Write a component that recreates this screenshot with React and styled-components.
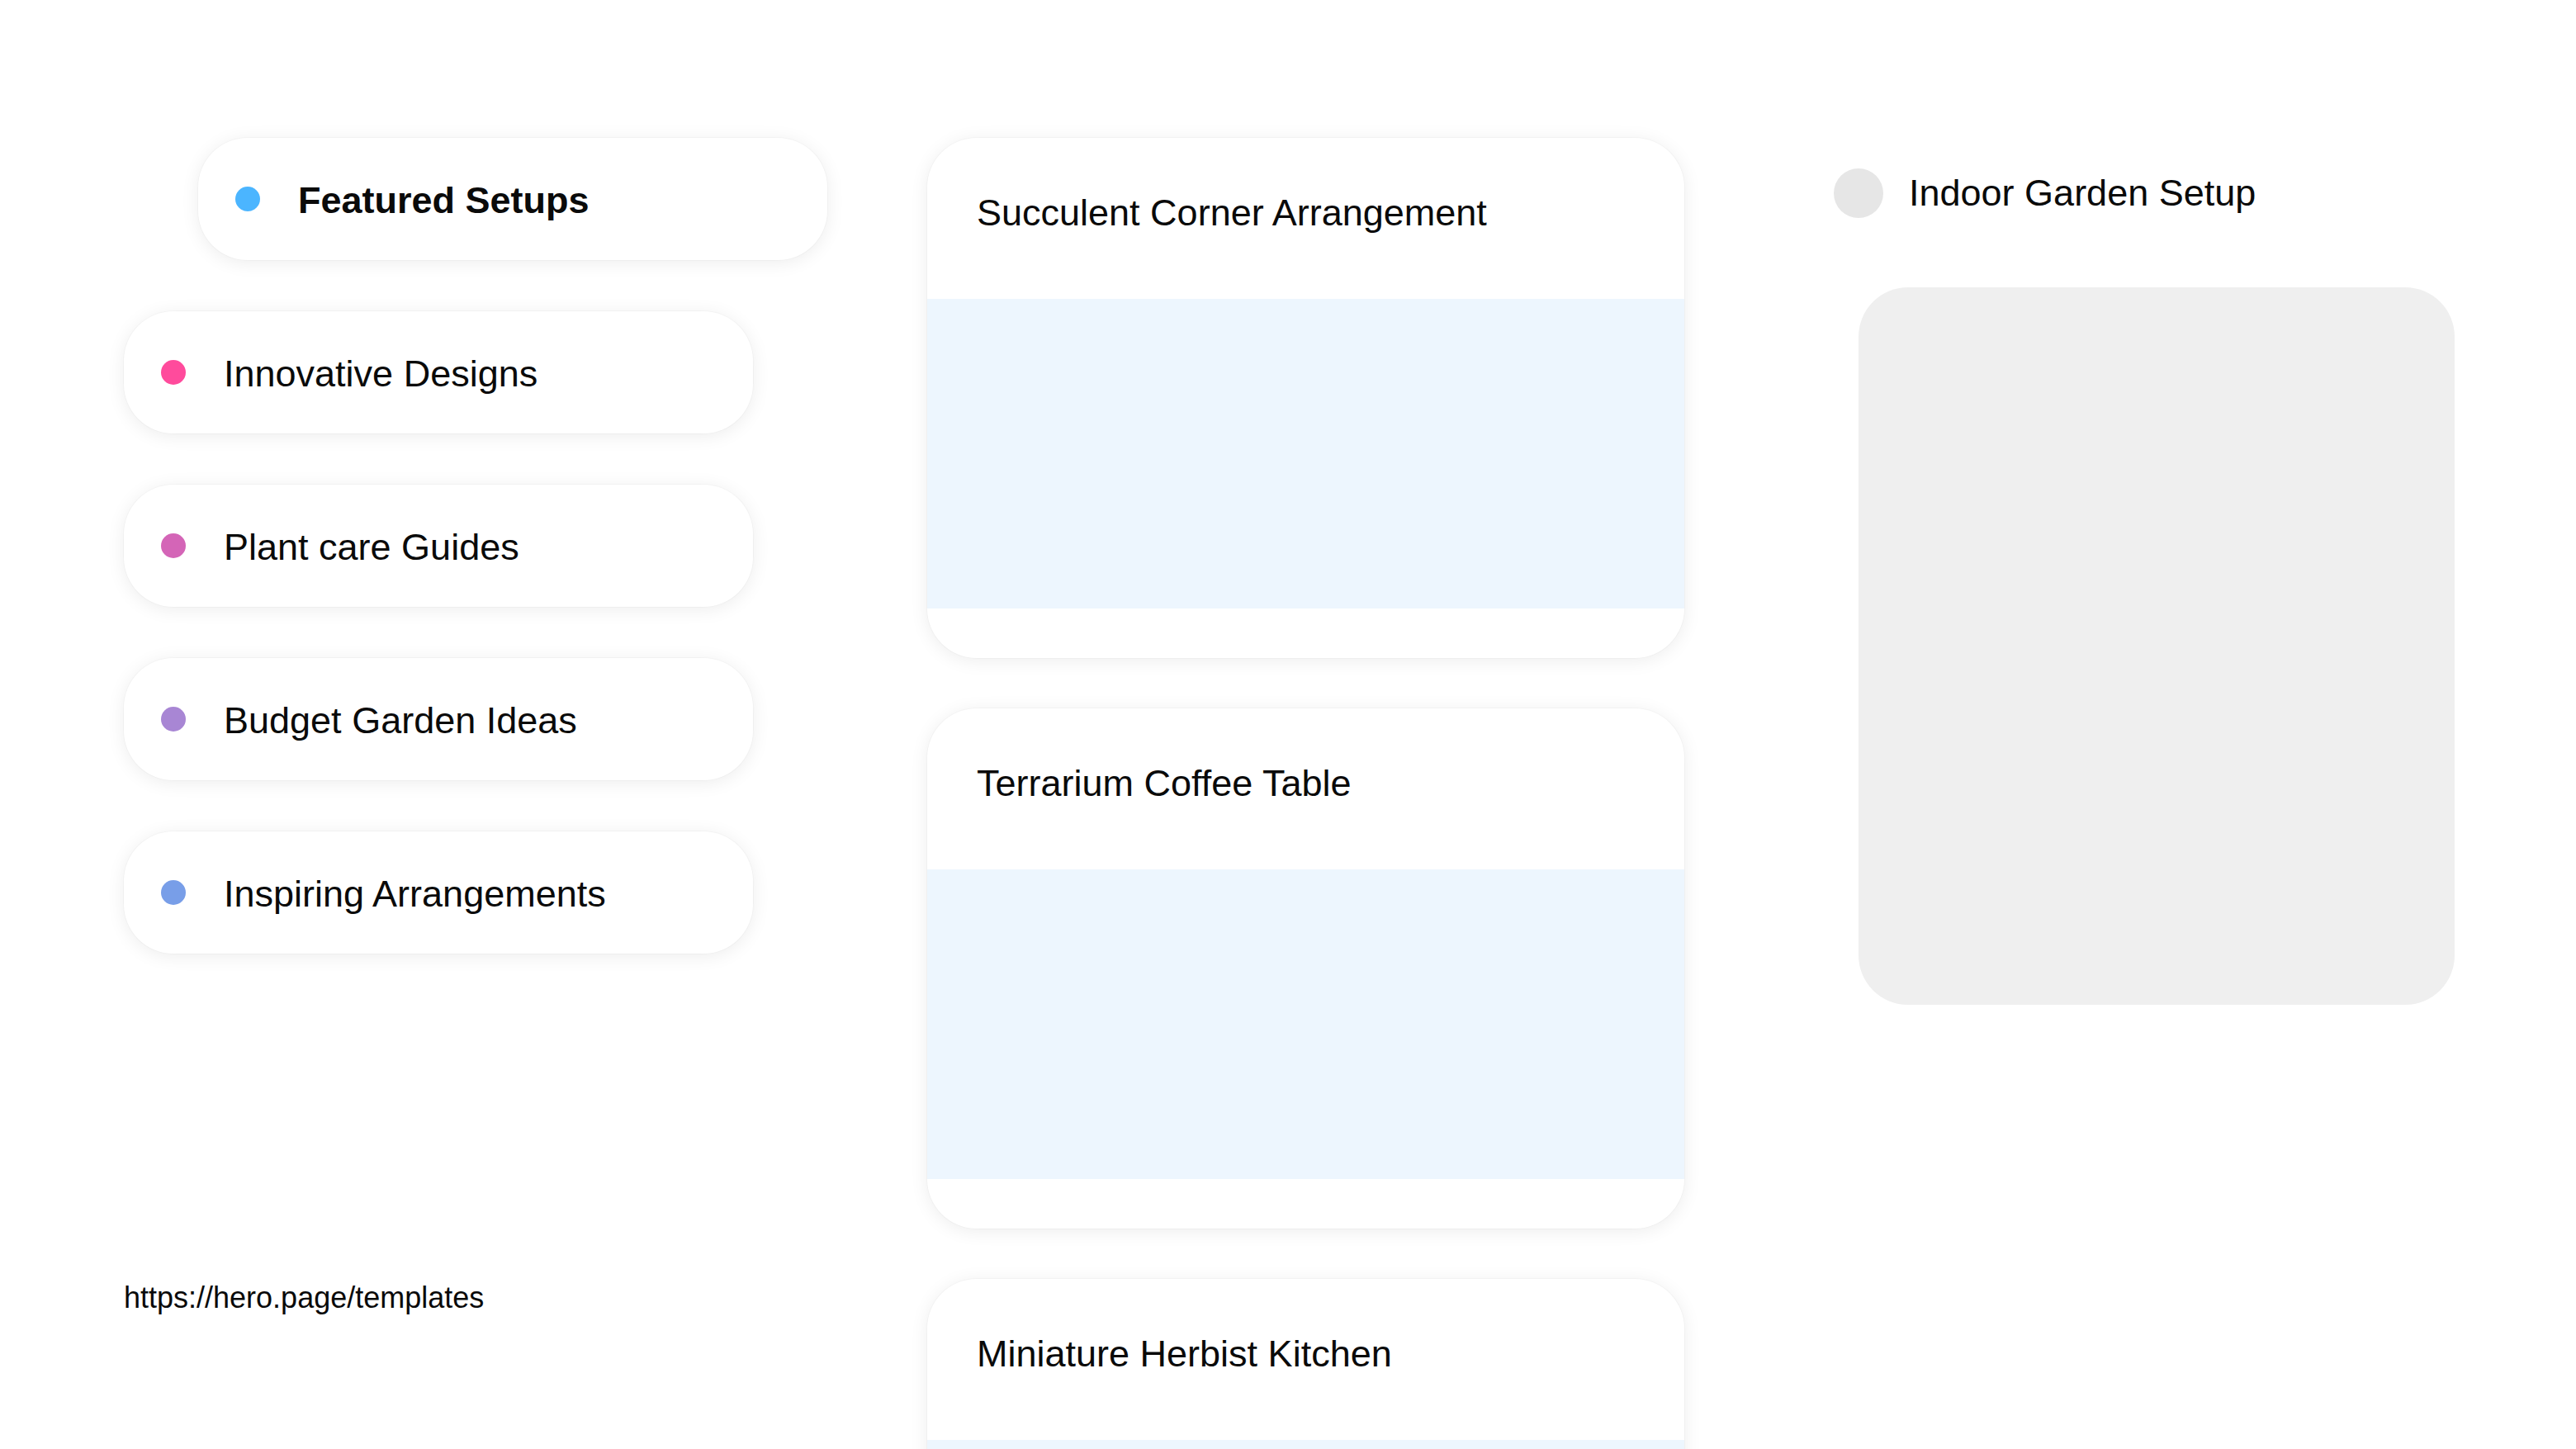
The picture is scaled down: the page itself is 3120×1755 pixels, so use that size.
import React from "react";
import styled, { createGlobalStyle } from "styled-components";

const GlobalStyle = createGlobalStyle`
  html, body {
    margin: 0;
    padding: 0;
    background: #ffffff;
    overflow: hidden;
  }
  body {
    font-family: "Liberation Sans", Arial, sans-serif;
    color: #0a0a0a;
  }
  * { box-sizing: border-box; }
`;

const Page = styled.div`
  display: flex;
  align-items: flex-start;
  height: 1755px;
  padding: 167px 0 163px 150px;
  overflow: hidden;
`;

const LeftColumn = styled.nav`
  display: flex;
  flex-direction: column;
  gap: 62px;
  width: 762px;
  height: 100%;
  flex-shrink: 0;
`;

const Pill = styled.div`
  display: flex;
  align-items: center;
  gap: 46px;
  width: 762px;
  height: 148px;
  padding: 0 45px;
  margin-left: ${(p) => (p.$featured ? "90px" : "0")};
  background: #ffffff;
  border-radius: 60px;
  box-shadow: 0 0 0 1px rgba(0, 0, 0, 0.025), 0 3px 22px rgba(0, 0, 0, 0.075);
  flex-shrink: 0;
`;

const Dot = styled.span`
  width: 30px;
  height: 30px;
  border-radius: 50%;
  background: ${(p) => p.$color};
  flex-shrink: 0;
`;

const PillLabel = styled.span`
  font-size: 45px;
  font-weight: ${(p) => (p.$featured ? 700 : 400)};
  line-height: 1.15;
  white-space: nowrap;
  transform: translateY(2px);
`;

const SourceLink = styled.div`
  margin-top: auto;
  font-size: 36px;
  line-height: 1.15;
  color: #0a0a0a;
`;

const MiddleColumn = styled.section`
  display: flex;
  flex-direction: column;
  gap: 61px;
  width: 917px;
  margin-left: 211px;
  flex-shrink: 0;
`;

const Card = styled.article`
  display: flex;
  flex-direction: column;
  width: 100%;
  height: 630px;
  background: #ffffff;
  border-radius: 60px;
  overflow: hidden;
  box-shadow: 0 0 0 1px rgba(0, 0, 0, 0.025), 0 3px 22px rgba(0, 0, 0, 0.075);
  flex-shrink: 0;
`;

const CardHeader = styled.header`
  height: 195px;
  padding: 65px 60px 0 60px;
  flex-shrink: 0;
`;

const CardTitle = styled.h3`
  margin: 0;
  font-size: 45px;
  font-weight: 400;
  line-height: 1.15;
  white-space: nowrap;
`;

const CardImage = styled.div`
  height: 375px;
  background: #edf6fe;
  flex-shrink: 0;
`;

const RightColumn = styled.aside`
  display: flex;
  flex-direction: column;
  width: 760px;
  margin-left: 181px;
  padding-top: 37px;
  flex-shrink: 0;
`;

const PreviewHeader = styled.div`
  display: flex;
  align-items: center;
  gap: 31px;
  height: 60px;
`;

const Avatar = styled.span`
  width: 60px;
  height: 60px;
  border-radius: 50%;
  background: #e6e6e6;
  flex-shrink: 0;
`;

const PreviewTitle = styled.span`
  font-size: 45px;
  line-height: 1.15;
  white-space: nowrap;
`;

const PreviewBox = styled.div`
  width: 722px;
  height: 869px;
  margin: 84px 0 0 30px;
  border-radius: 60px;
  background: #efefef;
`;

const categories = [
  { label: "Featured Setups", color: "#4bb5ff", featured: true },
  { label: "Innovative Designs", color: "#ff4b9c" },
  { label: "Plant care Guides", color: "#d465b7" },
  { label: "Budget Garden Ideas", color: "#a886d4" },
  { label: "Inspiring Arrangements", color: "#789ee8" },
];

const setups = [
  "Succulent Corner Arrangement",
  "Terrarium Coffee Table",
  "Miniature Herbist Kitchen",
];

export default function App() {
  return (
    <>
      <GlobalStyle />
      <Page>
        <LeftColumn>
          {categories.map((c) => (
            <Pill key={c.label} $featured={c.featured}>
              <Dot $color={c.color} />
              <PillLabel $featured={c.featured}>{c.label}</PillLabel>
            </Pill>
          ))}
          <SourceLink>https://hero.page/templates</SourceLink>
        </LeftColumn>

        <MiddleColumn>
          {setups.map((title) => (
            <Card key={title}>
              <CardHeader>
                <CardTitle>{title}</CardTitle>
              </CardHeader>
              <CardImage />
            </Card>
          ))}
        </MiddleColumn>

        <RightColumn>
          <PreviewHeader>
            <Avatar />
            <PreviewTitle>Indoor Garden Setup</PreviewTitle>
          </PreviewHeader>
          <PreviewBox />
        </RightColumn>
      </Page>
    </>
  );
}
